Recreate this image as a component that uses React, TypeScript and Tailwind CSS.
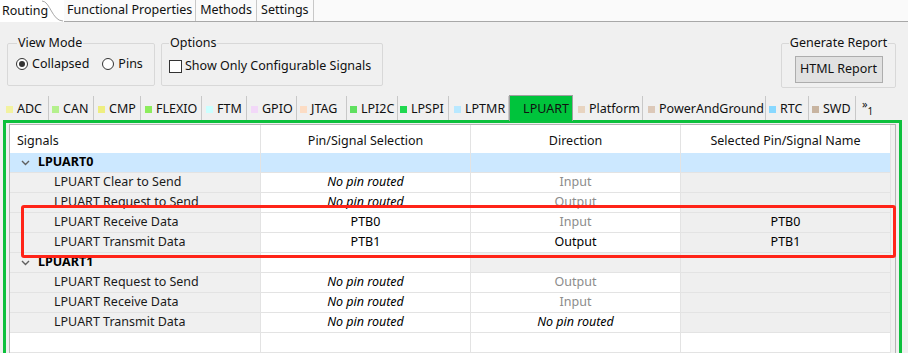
import React from "react";

const periph = [
    { name: "ADC", color: "bg-[#f2f2a0]", w: "w-[49px]", pl: "pl-[6px]" },
    { name: "CAN", color: "bg-[#b4f08c]", w: "w-[45px]", pl: "pl-[3px]" },
    { name: "CMP", color: "bg-[#eeee80]", w: "w-[47px]", pl: "pl-[4px]" },
    { name: "FLEXIO", color: "bg-[#8cec5c]", w: "w-[61px]", pl: "pl-[4px]" },
    { name: "FTM", color: "bg-[#ccffff]", w: "w-[45px]", pl: "pl-[4px]" },
    { name: "GPIO", color: "bg-[#f2d8f8]", w: "w-[50px]", pl: "pl-[4px]" },
    { name: "JTAG", color: "bg-[#fcdcc4]", w: "w-[50px]", pl: "pl-[3px]" },
    { name: "LPI2C", color: "bg-[#60e060]", w: "w-[51px]", pl: "pl-[3px]" },
    { name: "LPSPI", color: "bg-[#20d850]", w: "w-[51px]", pl: "pl-[2px]" },
    { name: "LPTMR", color: "bg-[#b8e8ff]", w: "w-[60px]", pl: "pl-[5px]" },
];

const periph2 = [
    { name: "Platform", color: "bg-[#e8d4c0]", w: "w-[70px]", pl: "pl-[5px]" },
    { name: "PowerAndGround", color: "bg-[#dcc8b8]", w: "w-[123px]", pl: "pl-[5px]" },
    { name: "RTC", color: "bg-[#88d8ff]", w: "w-[43px]", pl: "pl-[3px]" },
    { name: "SWD", color: "bg-[#c8b4a0]", w: "w-[47px]", pl: "pl-[3px]" },
];

type Row = {
    kind: "group" | "child" | "empty";
    label?: string;
    pin?: string;
    pinItalic?: boolean;
    dir?: string;
    dirActive?: boolean;
    dirItalic?: boolean;
    sel?: string;
    selected?: boolean;
};

const rows: Row[] = [
    { kind: "group", label: "LPUART0", selected: true },
    { kind: "child", label: "LPUART Clear to Send", pin: "No pin routed", pinItalic: true, dir: "Input" },
    { kind: "child", label: "LPUART Request to Send", pin: "No pin routed", pinItalic: true, dir: "Output" },
    { kind: "child", label: "LPUART Receive Data", pin: "PTB0", dir: "Input", sel: "PTB0" },
    { kind: "child", label: "LPUART Transmit Data", pin: "PTB1", dir: "Output", dirActive: true, sel: "PTB1" },
    { kind: "group", label: "LPUART1" },
    { kind: "child", label: "LPUART Request to Send", pin: "No pin routed", pinItalic: true, dir: "Output" },
    { kind: "child", label: "LPUART Receive Data", pin: "No pin routed", pinItalic: true, dir: "Input" },
    { kind: "child", label: "LPUART Transmit Data", pin: "No pin routed", pinItalic: true, dir: "No pin routed", dirActive: true, dirItalic: true },
    { kind: "empty" },
];

function Chevron() {
    return (
        <svg width="9" height="6" viewBox="0 0 9 6" className="mr-[8px]">
            <polyline points="1,1 4.5,4.5 8,1" fill="none" stroke="#606060" strokeWidth="1.4" />
        </svg>
    );
}

function TableRow({ row }: { row: Row }) {
    const cell = "h-[20px] border-b border-r border-[#e3e3e3] flex items-center";
    if (row.kind === "empty") {
        return (
            <div className="flex bg-white">
                <div className={`${cell} w-[251px]`} />
                <div className={`${cell} w-[210px]`} />
                <div className={`${cell} w-[210px]`} />
                <div className={`${cell} w-[210px]`} />
            </div>
        );
    }
    if (row.kind === "group") {
        const bg = row.selected ? "bg-[#cce8ff]" : "bg-[#f0f0f0]";
        return (
            <div className={`flex ${bg}`}>
                <div className={`${cell} w-[251px] pl-[11px] font-bold text-black`}>
                    <Chevron />
                    {row.label}
                </div>
                <div className={`${cell} w-[210px] ${row.selected ? "" : "bg-white"}`} />
                <div className={`${cell} w-[210px]`} />
                <div className={`${cell} w-[210px]`} />
            </div>
        );
    }
    return (
        <div className="flex">
            <div className={`${cell} w-[251px] pl-[44px] bg-[#f0f0f0] text-[#1a1a1a]`}>{row.label}</div>
            <div className={`${cell} w-[210px] justify-center bg-white text-black ${row.pinItalic ? "italic" : ""}`}>{row.pin}</div>
            <div className={`${cell} w-[210px] justify-center bg-white ${row.dirActive ? "text-black" : "text-[#8c8c8c]"} ${row.dirItalic ? "italic" : ""}`}>{row.dir}</div>
            <div className={`${cell} w-[210px] justify-center bg-[#efefef] text-black`}>{row.sel}</div>
        </div>
    );
}

export default function App() {
    return (
        <div className="relative w-[908px] h-[353px] overflow-hidden bg-[#f0f0f0] font-['Noto_Sans',sans-serif] text-[12.5px] text-[#111]">
            {/* editor tabs */}
            <div className="flex h-[22px] bg-[#fafafa] border-b border-[#a8a8a8]">
                <div className="relative flex items-center pl-[2px] w-[64px] bg-white h-[22px] -mb-px">
                    Routing
                    <svg className="absolute right-0 top-0" width="22" height="22" viewBox="0 0 22 22">
                        <path d="M0 1 C 8 1, 10 21, 21 21" fill="none" stroke="#a8a8a8" strokeWidth="1" />
                    </svg>
                </div>
                <div className="flex items-center px-[3px] border-r border-[#c8c8c8]">Functional Properties</div>
                <div className="flex items-center px-[4px] border-r border-[#c8c8c8]">Methods</div>
                <div className="flex items-center px-[4px] border-r border-[#c8c8c8]">Settings</div>
            </div>

            {/* option groups */}
            <div className="flex h-[61px] mt-[12px] pl-[7px]">
                <fieldset className="w-[148px] h-[52px] border border-[#d8d8d8] pl-[9px] pr-[4px] rounded-[2px]">
                    <legend className="px-[1px]">View Mode</legend>
                    <div className="flex items-center mt-[2px] -ml-[1px]">
                        <span className="w-[12px] h-[12px] rounded-full border border-[#333] bg-white flex items-center justify-center">
                            <span className="w-[6px] h-[6px] rounded-full bg-[#333]" />
                        </span>
                        <span className="ml-[4px]">Collapsed</span>
                        <span className="ml-[13px] w-[12px] h-[12px] rounded-full border border-[#333] bg-white" />
                        <span className="ml-[4px]">Pins</span>
                    </div>
                </fieldset>
                <fieldset className="ml-[6px] w-[222px] h-[52px] border border-[#d8d8d8] pl-[7px] rounded-[2px]">
                    <legend className="px-[1px]">Options</legend>
                    <div className="flex items-center mt-[4px]">
                        <span className="w-[13px] h-[13px] border border-[#333] bg-white" />
                        <span className="ml-[3px]">Show Only Configurable Signals</span>
                    </div>
                </fieldset>
                <div className="flex-1" />
                <fieldset className="mr-[12px] w-[115px] h-[54px] border border-[#d8d8d8] rounded-[2px] flex justify-center">
                    <legend className="mx-auto px-[1px]">Generate Report</legend>
                    <div className="mt-[3px] w-[88px] h-[27px] border border-[#adadad] bg-[#e1e1e1] flex items-center justify-center">
                        HTML Report
                    </div>
                </fieldset>
            </div>

            {/* peripheral tabs */}
            <div className="flex h-[24px] mt-[1px]">
                {periph.map((p) => (
                    <div key={p.name} className={`${p.w} ${p.pl} pt-[2px] flex items-center border-r border-[#c8c8c8]`}>
                        <span className={`w-[7px] h-[7px] ${p.color}`} />
                        <span className="ml-[4px]">{p.name}</span>
                    </div>
                ))}
                <div className="w-[64px] h-[26px] -mt-[1px] pt-[2px] flex items-center justify-center bg-[#00c43c] border border-b-0 border-[#a0a0a0] pl-[10px]">
                    LPUART
                </div>
                {periph2.map((p) => (
                    <div key={p.name} className={`${p.w} ${p.pl} pt-[2px] flex items-center border-r border-[#c8c8c8]`}>
                        <span className={`w-[7px] h-[7px] ${p.color}`} />
                        <span className="ml-[4px]">{p.name}</span>
                    </div>
                ))}
                <div className="w-[20px] pl-[6px] pt-[2px] flex">
                    <span className="text-[11px] leading-none">»</span>
                    <span className="mt-[8px] text-[10px] leading-none">1</span>
                </div>
            </div>

            {/* green panel */}
            <div className="ml-[3px] w-[899px] h-[240px] border-[3px] border-[#0cc03c] pl-[3px] pr-[3px] pt-[1px]">
                <div className="h-full border border-[#b4b4b4] bg-[#f0f0f0]">
                    <div className="w-[881px]">
                        <div className="flex h-[28px] bg-white">
                            <div className="w-[251px] border-r border-[#e3e3e3] flex items-center pl-[7px] pt-[4px]">Signals</div>
                            <div className="w-[210px] border-r border-[#e3e3e3] flex items-center justify-center pt-[4px]">Pin/Signal Selection</div>
                            <div className="w-[210px] border-r border-[#e3e3e3] flex items-center justify-center pt-[4px]">Direction</div>
                            <div className="w-[210px] border-r border-[#e3e3e3] flex items-center justify-center pt-[4px]">Selected Pin/Signal Name</div>
                        </div>
                        {rows.map((r, i) => (
                            <TableRow key={i} row={r} />
                        ))}
                    </div>
                </div>
            </div>

            {/* red highlight annotation */}
            <div className="absolute left-[21px] top-[205px] w-[875px] h-[53px] border-[3px] border-[#ff2418] rounded-[3px]" />
        </div>
    );
}
